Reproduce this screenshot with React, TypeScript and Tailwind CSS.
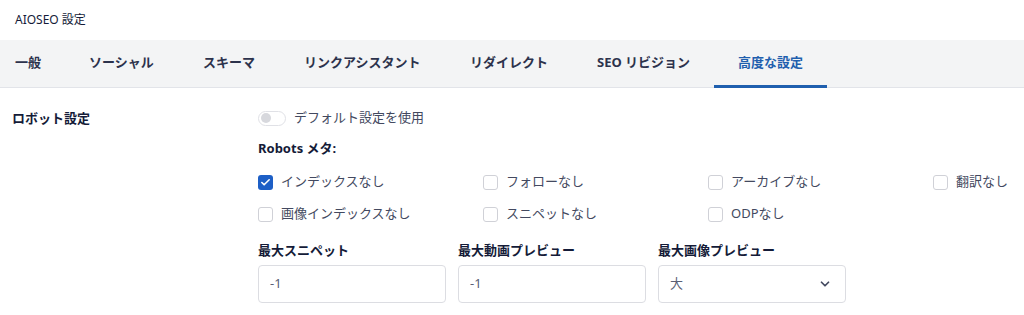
import { ChevronDown, Check } from "lucide-react";

const TABS = ["一般", "ソーシャル", "スキーマ", "リンクアシスタント", "リダイレクト", "SEO リビジョン", "高度な設定"];
const TAB_W = ["w-[74px]", "w-[114px]", "w-[101px]", "w-[166px]", "w-[127px]", "w-[117px]", ""];

const ROWS: { label: string; checked?: boolean }[][] = [
  [{ label: "インデックスなし", checked: true }, { label: "フォローなし" }, { label: "アーカイブなし" }, { label: "翻訳なし" }],
  [{ label: "画像インデックスなし" }, { label: "スニペットなし" }, { label: "ODPなし" }],
];

function Box({ label, checked, last }: { label: string; checked?: boolean; last?: boolean }) {
  return (
    <div className={(last ? "" : "w-[225px] ") + "shrink-0 flex items-center gap-[8px] text-[13px] text-[#434960]"}>
      {checked ? (
        <span className="w-[15px] h-[15px] rounded-[3px] bg-[#1d5fc6] flex items-center justify-center">
          <Check size={11} strokeWidth={3.5} className="text-white" />
        </span>
      ) : (
        <span className="w-[15px] h-[15px] rounded-[3px] border border-[#d0d1d7] bg-white" />
      )}
      <span>{label}</span>
    </div>
  );
}

export default function App() {
  return (
    <div className="w-[1024px] h-[315px] bg-white overflow-hidden" style={{ fontFamily: '"Noto Sans", "Noto Sans CJK JP", sans-serif' }}>
      <div className="h-[40px] pl-[15px] flex items-center text-[12px] text-[#141b38]">AIOSEO 設定</div>
      <div className="h-[48px] bg-[#f3f4f5] border-b border-[#e2e4e9] flex pl-[15px]">
        {TABS.map((t, i) => {
          const active = i === TABS.length - 1;
          return (
            <div
              key={t}
              className={
                "shrink-0 flex items-center text-[13px] font-bold border-b-[3px] -mb-px " +
                TAB_W[i] +
                (active ? " text-[#1f5fae] border-[#1f5fae] px-[24px]" : " text-[#2c324c] border-transparent")
              }
            >
              {t}
            </div>
          );
        })}
      </div>
      <div className="flex pt-[20px]">
        <div className="w-[258px] shrink-0 pl-[12px] text-[13px] font-bold text-[#141b38] leading-[20px]">ロボット設定</div>
        <div className="flex flex-col">
          <div className="flex items-center gap-[8px] h-[20px]">
            <span className="w-[28px] h-[15px] rounded-full border border-[#e0e1e6] bg-white flex items-center pl-[2px]">
              <span className="w-[10px] h-[10px] rounded-full bg-[#d7d8dd]" />
            </span>
            <span className="text-[13px] text-[#434960]">デフォルト設定を使用</span>
          </div>
          <div className="mt-[10px] text-[13px] font-bold text-[#141b38] leading-[20px]">Robots メタ:</div>
          <div className="mt-[14px] flex flex-col gap-[12px]">
            {ROWS.map((r, i) => (
              <div key={i} className="flex h-[20px]">
                {r.map((c, j) => (
                  <Box key={c.label} label={c.label} checked={c.checked} last={j === 3} />
                ))}
              </div>
            ))}
          </div>
          <div className="mt-[16px] flex gap-[12px]">
            {["最大スニペット", "最大動画プレビュー", "最大画像プレビュー"].map((l, i) => (
              <div key={l} className="w-[188px] flex flex-col">
                <div className="text-[13px] font-bold text-[#141b38] leading-[20px]">{l}</div>
                <div className="mt-[5px] h-[38px] border border-[#dcdde2] rounded-[4px] flex items-center justify-between px-[11px] text-[13px] text-[#5b6075]">
                  <span>{i === 2 ? "大" : "-1"}</span>
                  {i === 2 && <ChevronDown size={14} strokeWidth={3} className="text-[#434960] mr-[2px]" />}
                </div>
              </div>
            ))}
          </div>
        </div>
      </div>
    </div>
  );
}
